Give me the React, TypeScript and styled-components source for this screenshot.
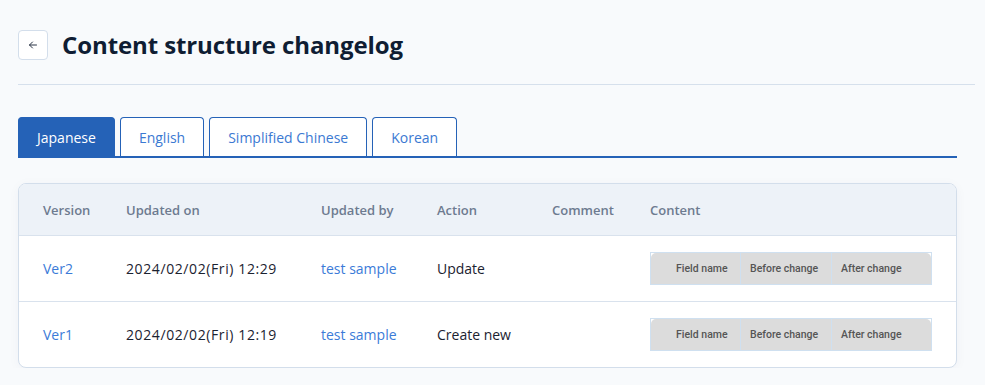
import React, { useState } from 'react';
import styled, { createGlobalStyle } from 'styled-components';

const GlobalStyle = createGlobalStyle`
  body {
    margin: 0;
    background: #f8fafc;
    font-family: 'Open Sans', 'Noto Sans', sans-serif;
    color: #1b2533;
  }
`;

const Page = styled.div`
  padding: 30px 10px 0 18px;
`;

const Header = styled.div`
  display: flex;
  align-items: center;
  gap: 14px;
  padding-bottom: 24px;
  border-bottom: 1px solid #d6e0ec;
`;

const BackButton = styled.button`
  width: 30px;
  height: 30px;
  display: flex;
  align-items: center;
  justify-content: center;
  background: #fff;
  border: 1px solid #d3deeb;
  border-radius: 4px;
  padding: 0;
  cursor: pointer;
`;

const Title = styled.h1`
  margin: 0;
  font-size: 24px;
  line-height: 30px;
  font-weight: 700;
  color: #0f1d33;
  letter-spacing: -0.1px;
`;

const Main = styled.div`
  width: 939px;
`;

const TabBar = styled.div`
  display: flex;
  gap: 5px;
  margin-top: 32px;
  border-bottom: 2px solid #2562b7;
`;

const Tab = styled.button<{ $active?: boolean }>`
  height: 39px;
  padding: 0 18px;
  border: 1px solid #2562b7;
  border-bottom: none;
  border-radius: 4px 4px 0 0;
  background: ${p => (p.$active ? '#2562b7' : '#fff')};
  color: ${p => (p.$active ? '#fff' : '#3b79d2')};
  font-family: inherit;
  font-size: 14px;
  cursor: pointer;
`;

const Card = styled.div`
  margin-top: 25px;
  background: #fff;
  border: 1px solid #d3deeb;
  border-radius: 8px;
  overflow: hidden;
  box-shadow: 0 2px 12px rgba(30, 50, 90, 0.04);
`;

const Table = styled.table`
  width: 100%;
  border-collapse: collapse;
  table-layout: fixed;
`;

const Th = styled.th<{ $w?: number }>`
  background: #edf2f8;
  height: 51px;
  padding: 0;
  text-align: left;
  font-size: 13px;
  font-weight: 600;
  color: #6d7b90;
  width: ${p => (p.$w ? `${p.$w}px` : 'auto')};
  &:first-child {
    padding-left: 24px;
  }
`;

const Tr = styled.tr`
  border-top: 1px solid #d9e2ed;
`;

const Td = styled.td`
  height: 65px;
  padding: 0;
  font-size: 14px;
  color: #1b2230;
  &:first-child {
    padding-left: 24px;
  }
`;

const DateText = styled.span`
  letter-spacing: 0.6px;
`;

const LinkText = styled.a`
  color: #3b7bd8;
  text-decoration: none;
  cursor: pointer;
`;

const DiffTable = styled.table`
  width: 282px;
  border-collapse: separate;
  border-spacing: 0;
  border: 1px solid #cfe0f0;
  font-family: 'Roboto', sans-serif;
  table-layout: fixed;
`;

const DiffTh = styled.th`
  height: 31px;
  padding: 0 0 0 9px;
  background: #dcdcdc;
  font-size: 10.5px;
  font-weight: 500;
  color: #555;
  text-align: left;
  white-space: nowrap;
  border-left: 1px solid #cfe0f0;
  &:first-child {
    border-left: none;
    border-top-left-radius: 5px;
    padding-left: 25px;
  }
  &:last-child {
    border-top-right-radius: 5px;
  }
`;

const ArrowIcon = () => (
  <svg width="10" height="10" viewBox="0 0 10 10" fill="none">
    <path d="M8.5 5H1.5M4.5 2L1.5 5L4.5 8" stroke="#2a3446" strokeWidth="1" strokeLinecap="round" strokeLinejoin="round" />
  </svg>
);

const DiffHeader = () => (
  <DiffTable>
    <colgroup>
      <col style={{ width: 89 }} />
      <col style={{ width: 91 }} />
      <col />
    </colgroup>
    <thead>
      <tr>
        <DiffTh>Field name</DiffTh>
        <DiffTh>Before change</DiffTh>
        <DiffTh>After change</DiffTh>
      </tr>
    </thead>
  </DiffTable>
);

const rows = [
  { version: 'Ver2', date: '2024/02/02(Fri) 12:29', user: 'test sample', action: 'Update' },
  { version: 'Ver1', date: '2024/02/02(Fri) 12:19', user: 'test sample', action: 'Create new' },
];

const tabs = ['Japanese', 'English', 'Simplified Chinese', 'Korean'];

export default function App() {
  const [active, setActive] = useState(0);
  return (
    <>
      <GlobalStyle />
      <Page>
        <Header>
          <BackButton aria-label="Back">
            <ArrowIcon />
          </BackButton>
          <Title>Content structure changelog</Title>
        </Header>
        <Main>
          <TabBar>
            {tabs.map((t, i) => (
              <Tab key={t} $active={i === active} onClick={() => setActive(i)}>
                {t}
              </Tab>
            ))}
          </TabBar>
          <Card>
            <Table>
              <thead>
                <tr>
                  <Th $w={83}>Version</Th>
                  <Th $w={195}>Updated on</Th>
                  <Th $w={116}>Updated by</Th>
                  <Th $w={115}>Action</Th>
                  <Th $w={98}>Comment</Th>
                  <Th>Content</Th>
                </tr>
              </thead>
              <tbody>
                {rows.map(r => (
                  <Tr key={r.version}>
                    <Td>
                      <LinkText>{r.version}</LinkText>
                    </Td>
                    <Td>
                      <DateText>{r.date}</DateText>
                    </Td>
                    <Td>
                      <LinkText>{r.user}</LinkText>
                    </Td>
                    <Td>{r.action}</Td>
                    <Td />
                    <Td>
                      <DiffHeader />
                    </Td>
                  </Tr>
                ))}
              </tbody>
            </Table>
          </Card>
        </Main>
      </Page>
    </>
  );
}
